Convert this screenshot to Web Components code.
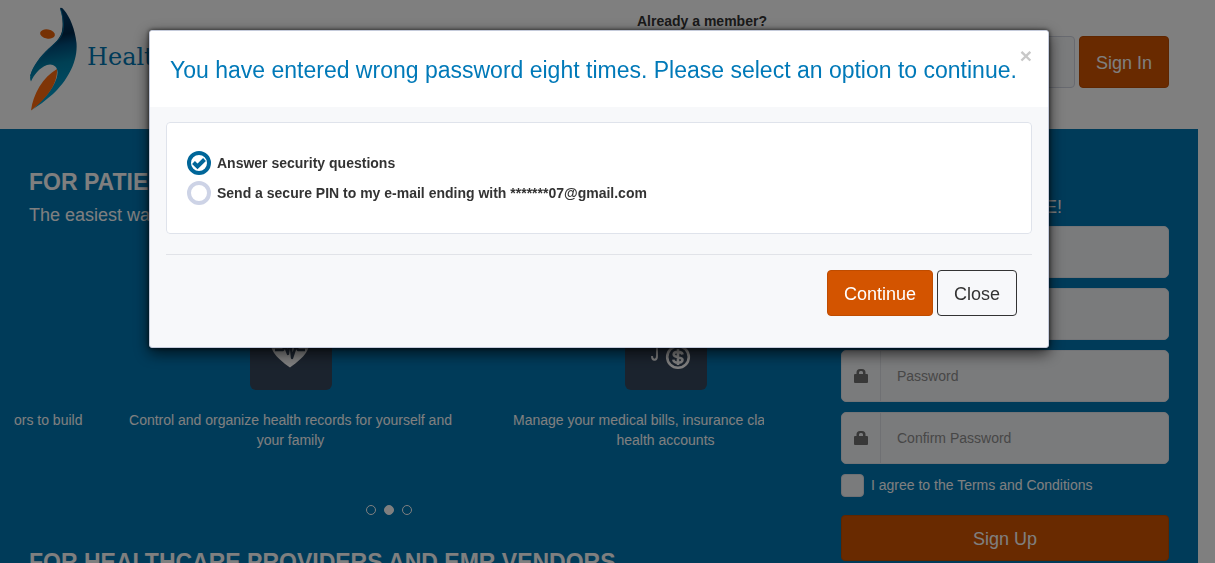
<!DOCTYPE html>
<html lang="en">
<head>
<meta charset="utf-8">
<meta name="viewport" content="width=device-width, initial-scale=1">
<title>Health Portal</title>
<style>
  html { height: 100%; }
  body {
    margin: 0; height: 100%; overflow: hidden; background: #fff; color: #333;
    font: 14px/20px "Liberation Sans", Arial, sans-serif;
    --brand: #0076b3; --accent: #d35400; --field: #f5f6f8; --line: #dfe3eb;
    --scroll-gap: 17px;
  }
</style>
</head>
<body>
<portal-page></portal-page>
<modal-dialog heading="You have entered wrong password eight times. Please select an option to continue.">
  <radio-option name="method" value="questions" checked>Answer security questions</radio-option>
  <radio-option name="method" value="pin">Send a secure PIN to my e-mail ending with *******07@gmail.com</radio-option>
  <action-button slot="actions">Continue</action-button>
  <action-button slot="actions" variant="outline">Close</action-button>
</modal-dialog>

<script>
class BaseElement extends HTMLElement {
  connectedCallback() {
    if (this.shadowRoot) return;
    const root = this.attachShadow({ mode: 'open' });
    root.innerHTML = '<style>*{box-sizing:border-box}</style>' + this.render();
  }
  attr(n) { return this.getAttribute(n) || ''; }
}

class ActionButton extends BaseElement {
  render() {
    return `<style>
      :host { display: inline-block; }
      button { width: 100%; height: var(--button-height, 46px); padding: 1px 16px 0; border: 1px solid #bf4c00; border-radius: 4px;
        background: var(--accent); color: #fff; font: 18px/24px "Liberation Sans", Arial, sans-serif; white-space: nowrap; cursor: pointer; display: block; }
      :host([variant=outline]) button { background: transparent; border-color: #333; color: #333; }
    </style><button type="button"><slot></slot></button>`;
  }
}

class BrandLogo extends BaseElement {
  render() {
    return `<style>
      :host { display: flex; gap: 10px; align-items: flex-start; }
      svg { width: 48px; height: 104px; flex: none; }
      span { margin-top: 35px; font: 24px/30px "DejaVu Serif", serif; color: var(--brand); }
    </style>
    <svg viewBox="29 7 48 104" aria-hidden="true">
      <defs><linearGradient id="g" gradientUnits="userSpaceOnUse" x1="46" y1="20" x2="62" y2="105">
        <stop offset="0" stop-color="#003a66"/><stop offset=".2" stop-color="#00284a"/>
        <stop offset=".32" stop-color="#005080"/><stop offset=".52" stop-color="#0080a8"/><stop offset=".75" stop-color="#0092c0"/><stop offset="1" stop-color="#00a8d8"/>
      </linearGradient></defs>
      <path fill="url(#g)" d="M60 8Q62 7 64 10C70 17 75 29 76.500 43C78 62 67 81 53 94Q43 103 31 110.500C43 101 57 85 57.500 73C58 66 52 63 47 65C39 68 34 75 31 81.500C27 75 37 60 45 52C54 43 62 39 62.500 27C63 20 62 13 60 8Z"/>
      <path fill="none" stroke="#007cae" stroke-width=".8" d="M60.500 9C64 20 65 31 60 38C53 47 36 58 30.500 76"/>
      <path fill="#ff6a0e" d="M57 69C58 84 46 99 31 110.500C33 94 43 77 57 69Z"/>
      <ellipse cx="47.500" cy="34" rx="7.500" ry="4.600" transform="rotate(10 47.500 34)" fill="#ec6208"/>
    </svg><span>Health</span>`;
  }
}

class SiteHeader extends BaseElement {
  render() {
    return `<style>
      :host { display: flex; justify-content: space-between; height: 129px; padding: 7px 29px 0; background: #fff; }
      form { width: 532px; padding-top: 4px; display: grid; grid-template-columns: 1fr 1fr 90px; column-gap: 4px; grid-template-rows: 20px 52px; row-gap: 5px; }
      strong { grid-column: 1 / -1; font-size: 14px; line-height: 20px; }
      input { min-width: 0; border: 1px solid #d0d4e0; border-radius: 4px; background: var(--field); }
      action-button { --button-height: 52px; }
    </style>
    <brand-logo></brand-logo>
    <form><strong>Already a member?</strong>
      <input type="text" aria-label="User name"><input type="password" aria-label="Password">
      <action-button>Sign In</action-button></form>`;
  }
}

class FeatureSlide extends BaseElement {
  render() {
    const icon = this.attr('icon');
    const art = {
      heart: `<path fill="#fff" d="M40 59.500C31 53 20 45 20 32C20 20 33 17 40 26C47 17 60 20 60 32C60 45 49 53 40 59.500Z"/>
        <path fill="none" stroke="#36475c" stroke-width="2.400" stroke-linejoin="round" d="M25 42h8l2-4 3 8 2-16 2 20 4-12 2 4h7"/>`,
      money: `<path fill="none" stroke="#fff" stroke-width="2" d="M32 20v28c0 5-5 5-5 0"/>
        <circle cx="53" cy="49" r="10.800" fill="none" stroke="#fff" stroke-width="2.600"/>
        <path fill="none" stroke="#fff" stroke-width="2.600" d="M57.500 46.500c-.5-3.500-8.800-3.500-8.800 0s8.800 1.800 8.800 5.300c0 4-8.800 3.700-9.200-.2M53 41v16"/>`,
      team: `<circle cx="41" cy="28" r="9" fill="#fff"/><path fill="#fff" d="M22 60c0-26 38-26 38 0z"/>`
    }[icon];
    return `<style>
      :host { display: block; flex: 0 0 375px; padding: 0 20px; color: #fff; text-align: center; }
      svg { display: block; width: 82px; height: 82px; margin: 0 auto 20px; border-radius: 6px; background: #36475c; }
      p { margin: 0; white-space: nowrap; }
    </style><svg viewBox="0 0 82 82" aria-hidden="true">${art}</svg><p><slot></slot></p>`;
  }
}

class FeatureCarousel extends BaseElement {
  render() {
    return `<style>
      :host { display: block; }
      .view { overflow: hidden; }
      .track { display: flex; transform: translateX(-286px); }
      nav { display: flex; justify-content: center; gap: 8px; margin-top: 55px; }
      button { width: 10px; height: 10px; padding: 0; border: 1px solid #fff; border-radius: 50%; background: none; }
      button[aria-current] { background: #fff; }
    </style>
    <div class="view"><div class="track"><slot></slot></div></div>
    <nav aria-label="Slides"><button aria-label="Slide 1"></button><button aria-label="Slide 2" aria-current="true"></button><button aria-label="Slide 3"></button></nav>`;
  }
}

class IconField extends BaseElement {
  render() {
    const shape = this.attr('icon') === 'lock'
      ? `<path fill-rule="evenodd" d="M2.500 5V3.500Q2.500 0 6 0H8Q11.500 0 11.500 3.500V5H13Q14 5 14 6V13Q14 14 13 14H1Q0 14 0 13V6Q0 5 1 5ZM5 5H9V3.500Q9 2 7.500 2H6.500Q5 2 5 3.500Z"/>`
      : `<circle cx="7" cy="4" r="4"/><path d="M0 14c0-8 14-8 14 0z"/>`;
    return `<style>
      :host { display: block; }
      label { display: flex; height: 52px; border: 1px solid #e6e8ee; border-radius: 5px; background: var(--field); overflow: hidden; }
      i { flex: 0 0 39px; display: grid; place-items: center; border-right: 1px solid #dfe1e6; }
      svg { width: 14px; height: 14px; fill: #707070; }
      input { flex: 1; min-width: 0; border: 0; padding: 0 16px; background: none; font: inherit; color: #333; }
      input::placeholder { color: #8f8f8f; opacity: 1; }
    </style>
    <label><i><svg viewBox="0 0 14 14" aria-hidden="true">${shape}</svg></i>
    <input type="${this.attr('type')}" placeholder="${this.attr('label')}" aria-label="${this.attr('label')}"></label>`;
  }
}

class SignupForm extends BaseElement {
  render() {
    return `<style>
      :host { display: block; padding-top: 66px; color: #fff; }
      h3 { margin: 0 0 7px; font: 18px/24px "Liberation Sans", Arial, sans-serif; text-align: center; }
      form { display: grid; gap: 10px; }
      .agree { display: flex; align-items: center; gap: 7px; height: 22px; }
      input { appearance: none; width: 23px; height: 23px; margin: 0; border: 1px solid #dde0e8; border-radius: 4px; background: var(--field); }
      action-button { margin-top: 9px; }
    </style>
    <h3>TRY IT FREE!</h3>
    <form>
      <icon-field icon="user" type="text" label="User Name"></icon-field>
      <icon-field icon="user" type="email" label="Email"></icon-field>
      <icon-field icon="lock" type="password" label="Password"></icon-field>
      <icon-field icon="lock" type="password" label="Confirm Password"></icon-field>
      <label class="agree"><input type="checkbox">I agree to the Terms and Conditions</label>
      <action-button>Sign Up</action-button>
    </form>`;
  }
}

class PortalPage extends BaseElement {
  render() {
    return `<style>
      :host { display: block; height: 100%; padding-right: var(--scroll-gap); overflow: hidden; }
      main { display: grid; grid-template-columns: minmax(0, 1fr) 328px; column-gap: 77px; padding: 0 29px 60px 14px; background: var(--brand); }
      section { padding-top: 40px; color: #fff; }
      h2 { margin: 0 0 0 15px; font-size: 23px; line-height: 26px; white-space: nowrap; }
      p { margin: 7px 0 80px 15px; font-size: 18px; line-height: 26px; }
      feature-carousel { margin-bottom: 34px; }
    </style>
    <site-header></site-header>
    <main>
      <section>
        <h2>FOR PATIENTS</h2>
        <p>The easiest way to manage your health</p>
        <feature-carousel>
          <feature-slide icon="team">Connect and collaborate with your top doctors to build<br>your care team</feature-slide>
          <feature-slide icon="heart">Control and organize health records for yourself and<br>your family</feature-slide>
          <feature-slide icon="money">Manage your medical bills, insurance claims, and<br>health accounts</feature-slide>
        </feature-carousel>
        <h2>FOR HEALTHCARE PROVIDERS AND EMR VENDORS</h2>
      </section>
      <signup-form></signup-form>
    </main>`;
  }
}

class RadioOption extends BaseElement {
  render() {
    return `<style>
      :host { display: block; }
      label { display: flex; align-items: center; gap: 6px; height: 30px; font-weight: bold; font-size: 14px; color: #333; }
      span { display: grid; flex: none; }
      input, svg { grid-area: 1 / 1; width: 24px; height: 24px; margin: 0; }
      input { appearance: none; border: 4px solid #cdd3e6; border-radius: 50%; }
      input:checked { border-color: #006699; }
      svg { display: none; pointer-events: none; }
      input:checked + svg { display: block; }
    </style>
    <label><span><input type="radio" name="${this.attr('name')}" value="${this.attr('value')}" ${this.hasAttribute('checked') ? 'checked' : ''}>
    <svg viewBox="0 0 24 24" aria-hidden="true"><path d="M6.500 11.500l4 4 7-7" fill="none" stroke="#069" stroke-width="4"/></svg></span><slot></slot></label>`;
  }
}

class ModalDialog extends BaseElement {
  render() {
    return `<style>
      :host { position: fixed; inset: 0; display: block; padding: 30px var(--scroll-gap) 30px 0; background: rgba(0,0,0,.5); overflow: hidden; }
      .box { max-width: 900px; margin: 0 auto; border: 1px solid #c5cbdb; border-radius: 3px; overflow: hidden; background: #f7f8fa; box-shadow: 0 5px 15px rgba(0,0,0,.7), 0 0 4px rgba(0,0,0,.7); }
      header { display: flex; justify-content: space-between; align-items: flex-start; height: 76px; padding: 14px 16px 0 20px; background: #fff; }
      h1 { margin: 10px 0 0; font: 23px/30px "Liberation Sans", Arial, sans-serif; color: #0079b8; white-space: nowrap; }
      .x { padding: 0; border: 0; background: none; color: #c8c8c8; font: bold 21px/22px "Liberation Sans", Arial, sans-serif; }
      fieldset { margin: 15px 16px 20px; padding: 25px 20px; min-height: 112px; border: 1px solid var(--line); border-radius: 4px; background: #fff; }
      footer { margin: 0 16px; padding: 15px 15px 31px; border-top: 1px solid #e1e3e8; display: flex; justify-content: flex-end; gap: 4px; }
    </style>
    <div class="box" role="dialog" aria-modal="true" aria-labelledby="t">
      <header><h1 id="t">${this.attr('heading')}</h1><button class="x" aria-label="Close dialog">×</button></header>
      <fieldset aria-labelledby="t"><slot></slot></fieldset>
      <footer><slot name="actions"></slot></footer>
    </div>`;
  }
}

customElements.define('action-button', ActionButton);
customElements.define('brand-logo', BrandLogo);
customElements.define('site-header', SiteHeader);
customElements.define('feature-slide', FeatureSlide);
customElements.define('feature-carousel', FeatureCarousel);
customElements.define('icon-field', IconField);
customElements.define('signup-form', SignupForm);
customElements.define('portal-page', PortalPage);
customElements.define('radio-option', RadioOption);
customElements.define('modal-dialog', ModalDialog);
</script>
</body>
</html>
